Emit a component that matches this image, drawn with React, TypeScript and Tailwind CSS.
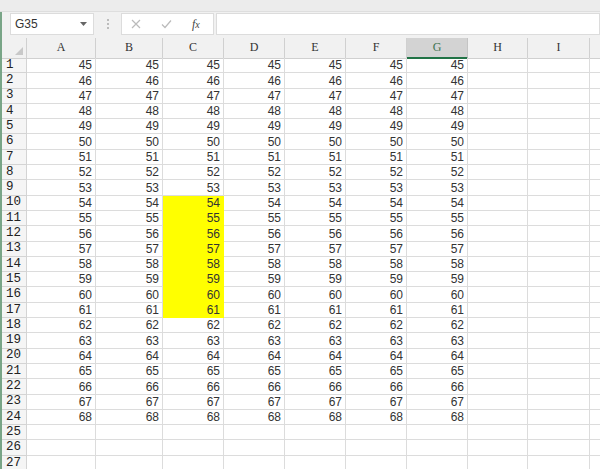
const COLS = ["A", "B", "C", "D", "E", "F", "G", "H", "I"];
const ROWS = Array.from({ length: 27 }, (_, i) => i + 1);

const gridCols = "grid-cols-[25px_69px_67px_61px_61px_61px_61px_61px_60px_62px_1fr]";

function FormulaBar() {
  return (
    <div className="flex h-[26px] items-start bg-[#f1f1f1] pl-[8px] pt-[1px] border-l-2 border-[#79a587]">
      <div className="flex h-[22px] w-[84px] items-center justify-between border border-[#dcdcdc] bg-white pl-[4px] pr-[6px] text-[12px] text-[#333]">
        <span>G35</span>
        <svg width="7" height="4" viewBox="0 0 7 4">
          <path d="M0 0H7L3.5 4Z" fill="#666" />
        </svg>
      </div>
      <div className="flex h-[22px] w-[27px] flex-col items-center justify-center gap-[2px]">
        <span className="h-[2px] w-[2px] rounded-full bg-[#aaa]" />
        <span className="h-[2px] w-[2px] rounded-full bg-[#aaa]" />
        <span className="h-[2px] w-[2px] rounded-full bg-[#aaa]" />
      </div>
      <div className="flex h-[22px] w-[93px] items-center border border-[#dcdcdc] bg-white pl-[9px]">
        <svg width="10" height="10" viewBox="0 0 10 10" className="mr-[20px]">
          <path d="M1 1L9 9M9 1L1 9" stroke="#bbb" strokeWidth="1.2" fill="none" />
        </svg>
        <svg width="11" height="10" viewBox="0 0 11 10" className="mr-[20px]">
          <path d="M1 5.5L4 8.5L10 1.5" stroke="#bbb" strokeWidth="1.2" fill="none" />
        </svg>
        <span className="font-['Liberation_Serif',serif] text-[12px] italic text-[#444]">
          f<span className="text-[10px]">x</span>
        </span>
      </div>
      <div className="ml-[2px] h-[22px] flex-1 border border-[#dcdcdc] bg-white" />
    </div>
  );
}

function HeaderRow() {
  return (
    <div className={`grid ${gridCols} h-[20px] bg-[#f1f1f1] font-['Liberation_Serif',serif] text-[12px] text-[#333]`}>
      <div className="relative border-b border-r border-[#d0d0d0]">
        <svg width="8" height="8" viewBox="0 0 8 8" className="absolute bottom-[3px] right-[3px]">
          <path d="M8 0L8 8L0 8Z" fill="#c8c8c8" />
        </svg>
      </div>
      {COLS.map((c) => (
        <div
          key={c}
          className={
            c === "G"
              ? "flex items-end justify-center border-b-2 border-r border-b-[#217346] border-r-[#c4c4c4] bg-[#d3d3d3] pb-[1px] text-[#3f7351]"
              : "flex items-end justify-center border-b border-r border-[#d0d0d0] pb-[2px]"
          }
        >
          {c}
        </div>
      ))}
      <div className="border-b border-[#d0d0d0]" />
    </div>
  );
}

function Row({ n }: { n: number }) {
  const hasData = n <= 24;
  return (
    <div className={`grid ${gridCols} h-[15.3px] text-[12px] leading-none`}>
      <div className="flex items-end border-b border-r border-[#d4d4d4] bg-[#f5f5f5] pb-[1px] pl-[4px] font-['Liberation_Mono',monospace] text-[12.5px] text-[#222]">
        {n}
      </div>
      {COLS.map((c, i) => {
        const yellow = c === "C" && n >= 10 && n <= 17;
        const value = hasData && i < 7 ? 44 + n : null;
        return (
          <div
            key={c}
            className={
              yellow
                ? "flex items-end justify-end border-r border-b border-[#ffff00] bg-[#ffff00] pb-[1px] pr-[3px] text-[#333]"
                : "flex items-end justify-end border-r border-b border-[#dcdcdc] pb-[1px] pr-[3px] text-[#333]"
            }
          >
            {value}
          </div>
        );
      })}
      <div className="border-b border-[#dcdcdc]" />
    </div>
  );
}

export default function App() {
  return (
    <div className="h-[469px] w-[600px] overflow-hidden bg-white font-['Liberation_Sans',Arial,sans-serif]">
      <div className="h-[12px] border-b border-[#dedede] bg-[#ececec]" />
      <FormulaBar />
      <div className="border-l-2 border-[#79a587]">
        <HeaderRow />
        {ROWS.map((n) => (
          <Row key={n} n={n} />
        ))}
      </div>
    </div>
  );
}
